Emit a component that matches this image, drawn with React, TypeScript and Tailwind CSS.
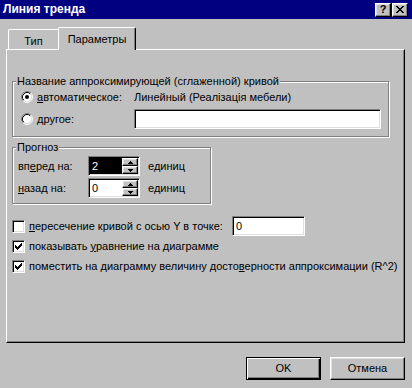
import React from 'react';

const raised =
  'border border-t-white border-l-white border-r-black border-b-black shadow-[inset_-1px_-1px_0_#808080,inset_1px_1px_0_#dfdfdf]';
const sunken =
  'border border-t-[#808080] border-l-[#808080] border-r-white border-b-white shadow-[inset_1px_1px_0_#000,inset_-1px_-1px_0_#dfdfdf]';

function Group({ title, className, children }: { title: string; className: string; children: React.ReactNode }) {
  return (
    <div className={`relative border border-[#808080] shadow-[inset_1px_1px_0_#fff,1px_1px_0_#fff] ${className}`}>
      <span className="absolute -top-[7px] left-[3px] bg-[#c0c0c0] px-[1px] leading-[13px]">{title}</span>
      {children}
    </div>
  );
}

function Radio({ checked }: { checked?: boolean }) {
  return (
    <svg width="12" height="12" viewBox="0 0 12 12" className="shrink-0">
      <circle cx="6" cy="6" r="4.5" fill="#fff" />
      <path d="M2.11 9.89A5.5 5.5 0 0 1 9.89 2.11" stroke="#808080" fill="none" />
      <path d="M2.11 9.89A5.5 5.5 0 0 0 9.89 2.11" stroke="#fff" fill="none" />
      <path d="M2.82 9.18A4.5 4.5 0 0 1 9.18 2.82" stroke="#000" fill="none" />
      <path d="M2.82 9.18A4.5 4.5 0 0 0 9.18 2.82" stroke="#dfdfdf" fill="none" />
      {checked && <circle cx="6" cy="6" r="2" fill="#000" />}
    </svg>
  );
}

function Check({ checked }: { checked?: boolean }) {
  return (
    <div className={`w-[13px] h-[13px] bg-white shrink-0 flex items-center justify-center ${sunken}`}>
      {checked && (
        <svg width="7" height="7" viewBox="0 0 7 7" shapeRendering="crispEdges">
          <path
            d="M6 0h1v1h-1z M5 1h2v1h-2z M0 2h1v1h-1z M4 2h3v1h-3z M0 3h2v1h-2z M3 3h3v1h-3z M0 4h5v1h-5z M1 5h3v1h-3z M2 6h1v1h-1z"
            fill="#000"
          />
        </svg>
      )}
    </div>
  );
}

function Spinner({ value, selected }: { value: string; selected?: boolean }) {
  return (
    <div className={`w-[52px] h-[20px] bg-white p-[1px] flex ${sunken}`}>
      <div className={`flex-1 pl-[2px] flex items-center ${selected ? 'bg-black text-white' : 'bg-white'}`}>{value}</div>
      <div className="w-[16px] flex flex-col">
        <div className={`h-[8px] bg-[#c0c0c0] flex items-center justify-center ${raised}`}>
          <svg width="5" height="3" viewBox="0 0 5 3" shapeRendering="crispEdges">
            <path d="M2 0h1v1h-1z M1 1h3v1h-3z M0 2h5v1h-5z" fill="#000" />
          </svg>
        </div>
        <div className={`h-[8px] bg-[#c0c0c0] flex items-center justify-center ${raised}`}>
          <svg width="5" height="3" viewBox="0 0 5 3" shapeRendering="crispEdges">
            <path d="M0 0h5v1h-5z M1 1h3v1h-3z M2 2h1v1h-1z" fill="#000" />
          </svg>
        </div>
      </div>
    </div>
  );
}

export default function App() {
  return (
    <div className="w-[412px] h-[388px] bg-[#c0c0c0] flex flex-col overflow-hidden font-['Liberation_Sans',Arial,sans-serif] text-[11px] leading-[13px] text-black">
      {/* title bar */}
      <div className="h-[19px] shrink-0 bg-[#000080] flex items-center justify-between pl-[3px] pr-[4px]">
        <span className="text-white font-bold text-[12px]">Линия тренда</span>
        <div className="flex gap-[1px]">
          <div className={`w-[16px] h-[14px] bg-[#c0c0c0] flex items-center justify-center font-bold text-[11px] leading-none ${raised}`}>?</div>
          <div className={`w-[16px] h-[14px] bg-[#c0c0c0] flex items-center justify-center ${raised}`}>
            <svg width="8" height="7" viewBox="0 0 8 7" shapeRendering="crispEdges">
              <path
                d="M0 0h2v1h-2z M6 0h2v1h-2z M1 1h2v1h-2z M5 1h2v1h-2z M2 2h4v1h-4z M3 3h2v1h-2z M2 4h4v1h-4z M1 5h2v1h-2z M5 5h2v1h-2z M0 6h2v1h-2z M6 6h2v1h-2z"
                fill="#000"
              />
            </svg>
          </div>
        </div>
      </div>

      {/* tabs */}
      <div className="mt-[8px] h-[22px] shrink-0 flex items-end pl-[8px]">
        <div className="h-[20px] w-[50px] border-t border-l border-white rounded-tl-[2px] flex justify-center pt-[5px]">Тип</div>
        <div className="relative z-10 -mb-px h-[23px] w-[78px] bg-[#c0c0c0] border-t border-l border-r border-t-white border-l-white border-r-black rounded-t-[2px] shadow-[inset_-1px_0_0_#808080] flex justify-center pt-[5px]">
          Параметры
        </div>
      </div>

      {/* panel */}
      <div className="ml-[6px] w-[399px] h-[294px] shrink-0 border border-t-white border-l-white border-r-black border-b-black shadow-[inset_-1px_-1px_0_#808080] flex flex-col">
        <Group title="Название аппроксимирующей (сглаженной) кривой" className="ml-[5px] mt-[31px] w-[377px] h-[56px] pt-[8px] pl-[8px]">
          <div className="h-[14px] flex items-center">
            <div className="w-[113px] flex items-center gap-[4px]">
              <Radio checked />
              <span>
                <u>а</u>втоматическое:
              </span>
            </div>
            <span>Линейный (Реалізація мебели)</span>
          </div>
          <div className="mt-[5px] h-[20px] flex items-center">
            <div className="w-[113px] flex items-center gap-[4px]">
              <Radio />
              <span>
                <u>д</u>ругое:
              </span>
            </div>
            <div className={`w-[247px] h-[20px] bg-white ${sunken}`} />
          </div>
        </Group>

        <Group title="Прогноз" className="ml-[5px] mt-[10px] w-[199px] h-[57px] pt-[8px] pl-[5px]">
          <div className="h-[20px] flex items-center">
            <span className="w-[70px]">
              вп<u>е</u>ред на:
            </span>
            <Spinner value="2" selected />
            <span className="ml-[8px]">единиц</span>
          </div>
          <div className="mt-[2px] h-[20px] flex items-center">
            <span className="w-[70px]">
              <u>н</u>азад на:
            </span>
            <Spinner value="0" />
            <span className="ml-[8px]">единиц</span>
          </div>
        </Group>

        <div className="ml-[5px] mt-[12px] flex flex-col">
          <div className="h-[20px] flex items-center">
            <div className="w-[220px] flex items-center gap-[4px]">
              <Check />
              <span>
                <u>п</u>ересечение кривой с осью Y в точке:
              </span>
            </div>
            <div className={`w-[73px] h-[20px] bg-white pl-[3px] flex items-center ${sunken}`}>0</div>
          </div>
          <div className="h-[20px] flex items-center gap-[4px]">
            <Check checked />
            <span>
              показывать <u>у</u>равнение на диаграмме
            </span>
          </div>
          <div className="h-[20px] flex items-center gap-[4px]">
            <Check checked />
            <span>
              поместить на диаграмму величину досто<u>в</u>ерности аппроксимации (R^2)
            </span>
          </div>
        </div>
      </div>

      {/* buttons */}
      <div className="mt-[14px] flex justify-end gap-[9px] pr-[7px]">
        <button className="w-[75px] h-[23px] bg-[#c0c0c0] border border-black shadow-[inset_1px_1px_0_#fff,inset_-1px_-1px_0_#000,inset_-2px_-2px_0_#808080] flex items-center justify-center">
          OK
        </button>
        <button className={`w-[75px] h-[23px] bg-[#c0c0c0] flex items-center justify-center ${raised}`}>Отмена</button>
      </div>
    </div>
  );
}
